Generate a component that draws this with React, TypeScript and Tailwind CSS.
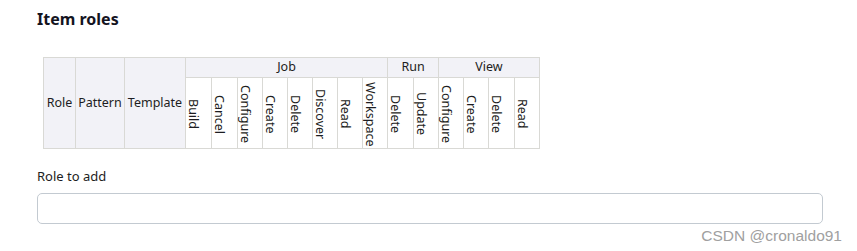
import React from 'react';

const groups = [
    { name: 'Job', perms: ['Build', 'Cancel', 'Configure', 'Create', 'Delete', 'Discover', 'Read', 'Workspace'] },
    { name: 'Run', perms: ['Delete', 'Update'] },
    { name: 'View', perms: ['Configure', 'Create', 'Delete', 'Read'] },
];

const permWidths = [26, 26, 25, 25, 25, 25, 25, 25, 26, 25, 25, 25, 26, 25];

export default function App() {
    const perms = groups.flatMap((g) => g.perms);

    return (
        <div className="relative h-[251px] w-[857px] overflow-hidden bg-white font-['Noto_Sans','Liberation_Sans',sans-serif] text-[#1d1d22]">
            <div className="pl-[37px] pr-[34px] pt-[8px]">
                <h2 className="text-[16px] font-bold leading-[22px] text-[#14141f]">Item roles</h2>

                <table className="ml-[6px] mt-[27px] table-fixed border-collapse text-[12.5px] leading-none">
                    <colgroup>
                        <col className="w-[32px]" />
                        <col className="w-[49px]" />
                        <col className="w-[61px]" />
                        {permWidths.map((w, i) => (
                            <col key={i} style={{ width: w }} />
                        ))}
                    </colgroup>
                    <thead>
                        <tr className="h-[20px]">
                            <th rowSpan={2} className="border border-[#d9d9d5] bg-[#f2f2f7] px-0 text-center align-middle font-normal">Role</th>
                            <th rowSpan={2} className="border border-[#d9d9d5] bg-[#f2f2f7] px-0 text-center align-middle font-normal">Pattern</th>
                            <th rowSpan={2} className="border border-[#d9d9d5] bg-[#f2f2f7] px-0 text-center align-middle font-normal">Template</th>
                            {groups.map((g) => (
                                <th
                                    key={g.name}
                                    colSpan={g.perms.length}
                                    className="border border-[#d9d9d5] bg-[#f2f2f7] text-center align-middle font-normal"
                                >
                                    {g.name}
                                </th>
                            ))}
                        </tr>
                        <tr className="h-[71px]">
                            {perms.map((p, i) => (
                                <th key={i} className="border border-[#d9d9d5] bg-white p-0 pt-[2px] text-center align-middle font-normal">
                                    <div className="mx-auto [writing-mode:vertical-rl]">{p}</div>
                                </th>
                            ))}
                        </tr>
                    </thead>
                </table>

                <label className="mt-[18px] block text-[13px] leading-[18px] text-[#1d1d22]">Role to add</label>
                <input
                    type="text"
                    className="mt-[8px] block h-[31px] w-full rounded-[5px] border border-[#c3cad1] bg-white px-2 text-[13px] outline-none"
                />
            </div>

            <div className="absolute bottom-[6px] right-[15px] font-['Liberation_Sans',Arial,sans-serif] text-[15.5px] leading-[18px] text-[#a0a0a0]">
                CSDN @cronaldo91
            </div>
        </div>
    );
}
